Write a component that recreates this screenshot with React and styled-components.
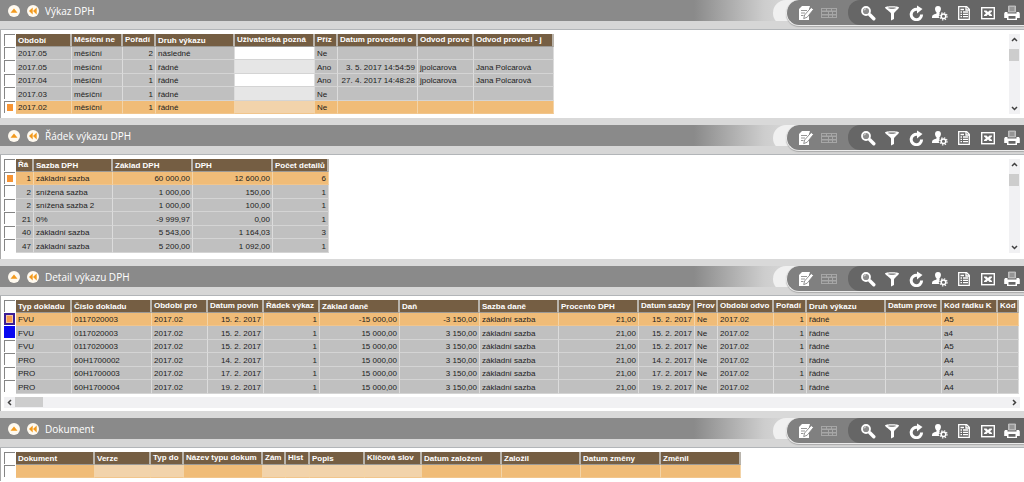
import React from "react";
import styled, { createGlobalStyle, css } from "styled-components";

const GlobalStyle = createGlobalStyle`
  * { box-sizing: border-box; }
  html { background: #fff; }
  body {
    margin: 0;
    overflow: hidden;
    font-family: "Liberation Sans", Arial, sans-serif;
    font-size: 8px;
    color: #1c1c1c;
  }
  button { padding: 0; border: 0; background: none; font: inherit; color: inherit; cursor: pointer; }
`;

const Page = styled.main`
  display: flex;
  flex-direction: column;
`;

const Panel = styled.section`
  border-top: ${(p) => p.$gap || 0}px solid #d9d9d9;
`;

const PanelHeader = styled.header`
  position: relative;
  padding-bottom: 8px;
  background: #d6d6d6;
  border-bottom: 1px solid #b2b5b8;
`;

const TitleBar = styled.div`
  display: flex;
  align-items: center;
  gap: 7px;
  height: 21px;
  padding-left: 8px;
  background: linear-gradient(
    to right,
    #8a8a8a calc(100% - 330px),
    #cdcdcd calc(100% - 260px),
    #d6d6d6 calc(100% - 240px)
  );
`;

const RoundButton = styled.button`
  display: flex;
  width: 12px;
  height: 12px;
  border-radius: 50%;
  background: #fffaf0;
`;

const Title = styled.h2`
  margin: 0 0 0 -1px;
  font: 400 10px/16px "Open Sans", "Noto Sans", sans-serif;
  color: #fff;
`;

const Toolbar = styled.div`
  position: absolute;
  top: 0;
  right: 0;
  display: flex;
  height: 26px;
  padding-left: 13px;
  border-radius: 13px 0 0 13px;
  background: linear-gradient(#f0f0f0 21px, transparent 21px);
`;

const EditTools = styled.div`
  display: flex;
  align-items: center;
  gap: 7px;
  height: 26px;
  padding-left: 11px;
  border: solid #ececec;
  border-width: 0 0 1px 1px;
  border-radius: 13px 0 0 13px;
  background: #808080;
  box-shadow: 0 1px 1px #aaa;
`;

const ViewTools = styled.div`
  display: flex;
  align-items: center;
  gap: 8px;
  height: 25px;
  margin-left: 4px;
  padding: 0 4px 0 12px;
  border-radius: 12px 0 0 12px;
  background: #666;
`;

const ToolButton = styled.button`
  display: flex;
  width: 16px;
  height: 16px;
  color: ${(p) => (p.disabled ? "#a6a6a6" : "#fff")};
`;

const Svg = styled.svg`
  display: block;
  width: 100%;
  height: 100%;
`;

const PanelBody = styled.div`
  display: flex;
  flex-direction: column;
  padding: 4px 4px ${(p) => p.$bottom}px 3px;
  border-left: 1px solid #a8a8a8;
  background: #fff;
`;

const GridArea = styled.div`
  display: flex;
  justify-content: space-between;
  overflow: hidden;
`;

const Table = styled.table`
  flex: none;
  width: ${(p) => p.$width}px;
  table-layout: fixed;
  border-collapse: separate;
  border-spacing: 0;
`;

const Col = styled.col`
  width: ${(p) => p.$width}px;
`;

const HeadCell = styled.th`
  height: 13px;
  padding: ${(p) => (p.$long ? "0 0 1px 2px" : "1px 0 0 2px")};
  border-right: 2px solid #b9b4ac;
  border-bottom: 1px solid #9c9a96;
  overflow: hidden;
  background: #755e43;
  color: #fff;
  font-weight: 700;
  line-height: 11px;
  text-align: left;
  white-space: nowrap;
`;

const tones = {
  plain: "#c0c0c0",
  white: "#ffffff",
  pale: "#e6e6e6",
  active: "#f0bc78",
  activePale: "#f2d3ab",
};

const Cell = styled.td`
  height: 13px;
  padding: 1px 2px 0;
  border-right: 1px solid ${(p) => (p.$tone.startsWith("active") ? "#f3d4a8" : "#dcdcdc")};
  border-bottom: 1px solid ${(p) => (p.$tone.startsWith("active") ? "#f1c58c" : "#d4d4d4")};
  overflow: hidden;
  background: ${(p) => tones[p.$tone]};
  line-height: 11px;
  text-align: ${(p) => (p.$right ? "right" : "left")};
  white-space: nowrap;
`;

const Row = styled.tr`
  &:nth-child(even) > td { height: 14px; }
`;

const CheckCell = styled.td`
  height: 13px;
  padding: 0;
  vertical-align: top;
`;

const Tick = styled.input`
  display: block;
  appearance: none;
  width: 11px;
  height: 12px;
  margin: 0;
  border: solid #858585;
  border-width: 1px 0 0 1px;
  background: #fff;
  ${(p) =>
    p.$mark === "orange" &&
    css`background: #f79433; box-shadow: inset 0 0 0 2px #fff;`}
  ${(p) =>
    p.$mark === "both" &&
    css`background: #f79c50; border: 2px solid #3c1e96; box-shadow: inset 0 0 0 1px #f4c6a0;`}
  ${(p) => p.$mark === "blue" && css`background: #0808f0; border-color: #0808f0;`}
`;

const Scrollbar = styled.div`
  display: flex;
  flex-direction: ${(p) => (p.$across ? "row" : "column")};
  flex: none;
  width: ${(p) => (p.$across ? "auto" : "11px")};
  height: ${(p) => (p.$across ? "11px" : "auto")};
  margin-top: ${(p) => (p.$across ? 3 : 0)}px;
  background: #f1f1f3;
`;

const ScrollButton = styled.button`
  flex: none;
  width: 11px;
  height: 11px;
  color: #404040;
`;

const ScrollTrack = styled.div`
  flex: 1;
  padding: ${(p) => (p.$across ? "0" : "4px 0")};
`;

const ScrollThumb = styled.div`
  width: ${(p) => (p.$across ? "28px" : "10px")};
  height: ${(p) => (p.$across ? "10px" : "12px")};
  background: #cdcdcd;
`;

const Chevron = ({ d }) => (
  <Svg viewBox="0 0 11 11" aria-hidden="true">
    <path d={d} fill="none" stroke="currentColor" strokeWidth="1.5" />
  </Svg>
);

const icons = {
  edit: (
    <>
      <path d="M1 4l3-3h8l-1 3v11H1z" fill="currentColor" />
      <path d="M3 5.500h6M3 8h4M3 10.500h2.500" stroke="#8a8a8a" strokeWidth=".9" />
      <path d="M13.200 2.500l2.300 1.900-6.300 7.800-3.500 1.400.9-3.600z" fill="currentColor" stroke="#777" strokeWidth=".8" />
    </>
  ),
  cells: (
    <path d="M0 3h16v10H0z M1 4v1.500h4V4z M6 4v1.500h4V4z M11 4v1.500h4V4z M1 7v2h6V7z M8 7v2h3V7z M12 7v2h3V7z M1 10.500V12h6v-1.500z M8 10.500V12h3v-1.500z M12 10.500V12h3v-1.500z" fillRule="evenodd" fill="currentColor" />
  ),
  search: (
    <>
      <circle cx="6" cy="6" r="4" fill="#8c8c8c" stroke="currentColor" strokeWidth="1.800" />
      <path d="M4 5.500a2.300 2.300 0 0 1 2-1.700" fill="none" stroke="#eee" strokeWidth=".8" />
      <path d="M9.800 9.800l4 4" stroke="currentColor" strokeWidth="3.400" strokeLinecap="round" />
    </>
  ),
  filter: (
    <path d="M1 2.500C1 .9 15 .9 15 2.500c0 1-4.500 4.500-5 6V14l-3 1.500v-7C6.500 7 1 3.500 1 2.500zM3.500 3c2 .9 7 .9 9 0-2-.6-7-.6-9 0z" fill="currentColor" fillRule="evenodd" />
  ),
  refresh: (
    <>
      <path d="M13.600 9.500A5.200 5.200 0 1 1 9.500 4.400" fill="none" stroke="currentColor" strokeWidth="3" />
      <path d="M9 .5l5.500 3.500L9 8.500z" fill="currentColor" />
    </>
  ),
  user: (
    <>
      <path d="M6 1c4.200 0 3.200 5 1.500 6.300v1.200l2 1V13H0c0-3 1-3.300 4.500-4.500V7.300C2.800 6 1.800 1 6 1z" fill="currentColor" />
      <circle cx="11.500" cy="11.300" r="4.600" fill="#666" />
      <circle cx="11.500" cy="11.300" r="2.300" fill="none" stroke="currentColor" strokeWidth="1.500" />
      <circle cx="11.500" cy="11.300" r="3.600" fill="none" stroke="currentColor" strokeWidth="1.200" strokeDasharray="1.400 1.427" />
    </>
  ),
  report: (
    <>
      <path d="M2.700 1.700h8l2.600 2.600v10H2.700z" fill="none" stroke="currentColor" strokeWidth="1.300" />
      <path d="M10 1.500v3.500h3.500M4.500 4.500h3.500M4.500 7h1.500M7 7h5M4.500 9.300h1.500M7 9.300h5M4.500 11.700h1.500M7 11.700h5" fill="none" stroke="currentColor" strokeWidth="1.300" />
    </>
  ),
  excel: (
    <>
      <rect x="1.700" y="2.700" width="12.600" height="11" fill="none" stroke="currentColor" strokeWidth="1.400" />
      <path d="M4 5.500h2.500L8 7l1.500-1.500H12v1L10 8.200l2 1.800v1H9.500L8 9.500 6.500 11H4v-1l2-1.800-2-1.700z" fill="currentColor" />
    </>
  ),
  print: (
    <>
      <path d="M4.500 1h7v6h-7z" fill="#aaa" stroke="#ccc" strokeWidth=".8" />
      <path d="M6 3h4M6 5h4" stroke="#777" strokeWidth=".8" />
      <path d="M1 7h2.500v1.500h9V7H15l.8 1.500V13H13v2H3v-2H.2V8.500z M4.500 11v2.800h7V11z" fill="currentColor" fillRule="evenodd" />
    </>
  ),
};

const Tool = ({ name, label, disabled }) => (
  <ToolButton type="button" aria-label={label} title={label} disabled={disabled}>
    <Svg viewBox="0 0 16 16" aria-hidden="true">{icons[name]}</Svg>
  </ToolButton>
);

const viewTools = [
  ["search", "Hledat"],
  ["filter", "Filtr"],
  ["refresh", "Obnovit"],
  ["user", "Nastavení uživatele"],
  ["report", "Sestava"],
  ["excel", "Export do Excelu"],
  ["print", "Tisk"],
];

function Header({ title }) {
  return (
    <PanelHeader>
      <TitleBar>
        <RoundButton type="button" aria-label="Sbalit">
          <Svg viewBox="0 0 12 12" aria-hidden="true">
            <path d="M6 3.500L9.500 7.800h-7z" fill="#f39a1d" />
          </Svg>
        </RoundButton>
        <RoundButton type="button" aria-label="Na začátek">
          <Svg viewBox="0 0 12 12" aria-hidden="true">
            <path d="M5.700 2.500v7L2 6zM9.700 2.500v7L6 6z" fill="#f39a1d" />
          </Svg>
        </RoundButton>
        <Title>{title}</Title>
      </TitleBar>
      <Toolbar>
        <EditTools>
          <Tool name="edit" label="Upravit" />
          <Tool name="cells" label="Hromadná úprava" disabled />
          <ViewTools>
            {viewTools.map(([name, label]) => (
              <Tool key={name} name={name} label={label} />
            ))}
          </ViewTools>
        </EditTools>
      </Toolbar>
    </PanelHeader>
  );
}

// Column: [heading, width, options]; options: r = right aligned, l = long heading, e = editable
const has = (col, flag) => (col[2] || "").includes(flag);

function toneOf(col, active, index) {
  if (active) return has(col, "e") ? "activePale" : "active";
  if (has(col, "e")) return index % 2 ? "pale" : "white";
  return "plain";
}

function Grid({ title, columns, rows, active, marks = {} }) {
  const width = columns.reduce((sum, c) => sum + c[1], 12);
  return (
    <Table $width={width} aria-label={title}>
      <colgroup>
        <Col $width={12} />
        {columns.map((c, i) => <Col key={i} $width={c[1]} />)}
      </colgroup>
      <thead>
        <tr>
          <CheckCell><Tick type="checkbox" aria-label="Vybrat vše" /></CheckCell>
          {columns.map((c, i) => (
            <HeadCell key={i} scope="col" $long={has(c, "l")}>{c[0]}</HeadCell>
          ))}
        </tr>
      </thead>
      <tbody>
        {rows.map((row, r) => (
          <Row key={r}>
            <CheckCell>
              <Tick type="checkbox" aria-label={`Vybrat řádek ${r + 1}`} $mark={marks[r]} />
            </CheckCell>
            {columns.map((c, i) => (
              <Cell key={i} $right={has(c, "r")} $tone={toneOf(c, r === active, r)}>{row[i]}</Cell>
            ))}
          </Row>
        ))}
      </tbody>
    </Table>
  );
}

const VerticalScroll = () => (
  <Scrollbar>
    <ScrollButton type="button" aria-label="Nahoru"><Chevron d="M3 7l2.500-2.500L8 7" /></ScrollButton>
    <ScrollTrack><ScrollThumb /></ScrollTrack>
    <ScrollButton type="button" aria-label="Dolů"><Chevron d="M3 4l2.500 2.500L8 4" /></ScrollButton>
  </Scrollbar>
);

const HorizontalScroll = () => (
  <Scrollbar $across>
    <ScrollButton type="button" aria-label="Vlevo"><Chevron d="M7 3L4.500 5.500 7 8" /></ScrollButton>
    <ScrollTrack $across><ScrollThumb $across /></ScrollTrack>
    <ScrollButton type="button" aria-label="Vpravo"><Chevron d="M4 3l2.500 2.500L4 8" /></ScrollButton>
  </Scrollbar>
);

const reportColumns = [
  ["Období", 56], ["Měsíční ne", 51, "l"], ["Pořadí", 33, "lr"], ["Druh výkazu", 79],
  ["Uživatelská pozná", 80, "le"], ["Příz", 23, "l"], ["Datum provedení o", 80, "lr"],
  ["Odvod prove", 56, "l"], ["Odvod provedl - j", 80, "l"],
];
const reportRows = [
  ["2017.05", "měsíční", "2", "následné", "", "Ne"],
  ["2017.05", "měsíční", "1", "řádné", "", "Ano", "3. 5. 2017 14:54:59", "jpolcarova", "Jana Polcarová"],
  ["2017.04", "měsíční", "1", "řádné", "", "Ano", "27. 4. 2017 14:48:28", "jpolcarova", "Jana Polcarová"],
  ["2017.03", "měsíční", "1", "řádné", "", "Ne"],
  ["2017.02", "měsíční", "1", "řádné", "", "Ne"],
];

const lineColumns = [
  ["Řá", 18, "lr"], ["Sazba DPH", 79], ["Základ DPH", 80, "r"], ["DPH", 80, "r"], ["Počet detailů", 56, "r"],
];
const lineRows = [
  ["1", "základní sazba", "60 000,00", "12 600,00", "6"],
  ["2", "snížená sazba", "1 000,00", "150,00", "1"],
  ["2", "snížená sazba 2", "1 000,00", "100,00", "1"],
  ["21", "0%", "-9 999,97", "0,00", "1"],
  ["40", "základní sazba", "5 543,00", "1 164,03", "3"],
  ["47", "základní sazba", "5 200,00", "1 092,00", "1"],
];

const detailColumns = [
  ["Typ dokladu", 56], ["Číslo dokladu", 80], ["Období pro", 56, "l"], ["Datum povin", 56, "lr"],
  ["Řádek výkaz", 56, "lr"], ["Základ daně", 80, "r"], ["Daň", 80, "r"], ["Sazba daně", 79],
  ["Procento DPH", 80, "r"], ["Datum sazby", 56, "lr"], ["Prov", 23, "l"], ["Období odvo", 56, "l"],
  ["Pořadí", 33, "lr"], ["Druh výkazu", 79], ["Datum prove", 56, "l"], ["Kód řádku K", 56, "l"], ["Kód", 21, "l"],
];
const detailRow = (type, number, date, code, base = "15 000,00", tax = "3 150,00") => [
  type, number, "2017.02", date, "1", base, tax, "základní sazba", "21,00", date, "Ne", "2017.02", "1", "řádné", "", code, "",
];
const detailRows = [
  detailRow("FVU", "0117020003", "15. 2. 2017", "A5", "-15 000,00", "-3 150,00"),
  detailRow("FVU", "0117020003", "15. 2. 2017", "a4"),
  detailRow("FVU", "0117020003", "15. 2. 2017", "A5"),
  detailRow("PRO", "60H1700002", "14. 2. 2017", "A4"),
  detailRow("PRO", "60H1700003", "17. 2. 2017", "A4"),
  detailRow("PRO", "60H1700004", "19. 2. 2017", "A4"),
];

const documentColumns = [
  ["Dokument", 79], ["Verze", 56, "e"], ["Typ do", 33, "le"], ["Název typu dokum", 79, "l"], ["Zám", 23, "le"],
  ["Hist", 24, "le"], ["Popis", 55, "e"], ["Klíčová slov", 57, "le"], ["Datum založení", 80], ["Založil", 79],
  ["Datum změny", 80], ["Změnil", 80],
];

export default function App() {
  return (
    <Page>
      <GlobalStyle />
      <Panel>
        <Header title="Výkaz DPH" />
        <PanelBody $bottom={4}>
          <GridArea>
            <Grid title="Výkaz DPH" columns={reportColumns} rows={reportRows} active={4} marks={{ 4: "orange" }} />
            <VerticalScroll />
          </GridArea>
        </PanelBody>
      </Panel>
      <Panel $gap={7}>
        <Header title="Řádek výkazu DPH" />
        <PanelBody $bottom={6}>
          <GridArea>
            <Grid title="Řádek výkazu DPH" columns={lineColumns} rows={lineRows} active={0} marks={{ 0: "orange" }} />
            <VerticalScroll />
          </GridArea>
        </PanelBody>
      </Panel>
      <Panel $gap={7}>
        <Header title="Detail výkazu DPH" />
        <PanelBody $bottom={3}>
          <GridArea>
            <Grid title="Detail výkazu DPH" columns={detailColumns} rows={detailRows} active={0} marks={{ 0: "both", 1: "blue" }} />
          </GridArea>
          <HorizontalScroll />
        </PanelBody>
      </Panel>
      <Panel $gap={7}>
        <Header title="Dokument" />
        <PanelBody $bottom={3}>
          <GridArea>
            <Grid title="Dokument" columns={documentColumns} rows={[[]]} active={0} />
          </GridArea>
        </PanelBody>
      </Panel>
    </Page>
  );
}
